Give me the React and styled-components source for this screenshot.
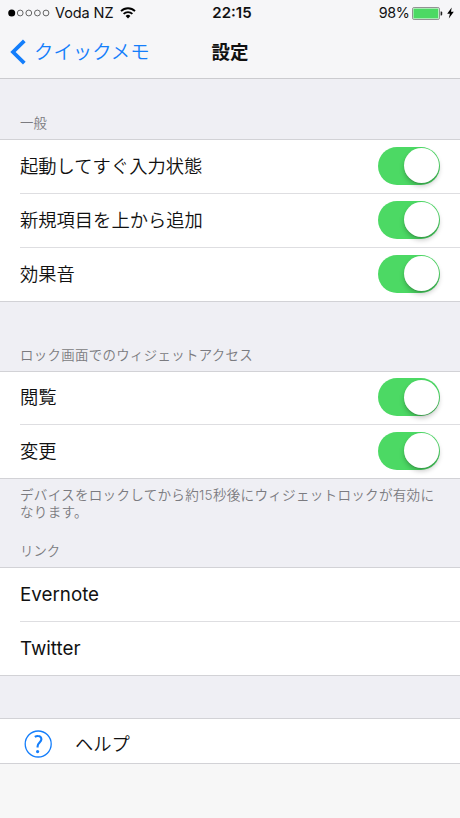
import React from "react";
import styled, { createGlobalStyle } from "styled-components";

const GlobalStyle = createGlobalStyle`
  *, *::before, *::after { box-sizing: border-box; }
  body {
    margin: 0;
    background: #efeff4;
    color: #111;
    font-family: Inter, "Noto Sans CJK JP", sans-serif;
  }
`;

const Screen = styled.main`
  display: flex;
  flex-direction: column;
  width: 460px;
  height: 818px;
  overflow: hidden;
  background: #efeff4;
`;

const Header = styled.header`
  flex: none;
  height: 79px;
  background: #f6f6f8;
  border-bottom: 1px solid #cbcbcf;
`;

const StatusBar = styled.div`
  display: grid;
  grid-template-columns: 1fr auto 1fr;
  align-items: center;
  height: 26px;
  padding: 0 6px 0 8px;
  font-size: 14.5px;
  line-height: 26px;
`;

const Carrier = styled.div`
  display: flex;
  align-items: center;
  white-space: nowrap;
`;

const CarrierName = styled.span`
  margin: 0 7px 0 5px;
  letter-spacing: -0.1px;
`;

const Clock = styled.time`
  padding-left: 2px;
  font-weight: 600;
  font-size: 15px;
`;

const Power = styled.div`
  display: flex;
  align-items: center;
  justify-content: flex-end;
  gap: 4px;
`;

const Percent = styled.span`
  margin-right: -1.5px;
  font-size: 14.3px;
  letter-spacing: -0.35px;
`;

const NavBar = styled.nav`
  display: grid;
  grid-template-columns: 1fr auto 1fr;
  align-items: center;
  height: 52px;
  padding: 0 10px;
`;

const BackButton = styled.button`
  display: flex;
  align-items: center;
  gap: 8px;
  padding: 0;
  border: 0;
  background: none;
  color: #147efb;
  font: inherit;
  font-size: 19.4px;
  font-weight: 350;
  line-height: 30px;
`;

const Title = styled.h1`
  margin: 0;
  font-size: 18.5px;
  line-height: 30px;
  font-weight: 700;
`;

const SectionLabel = styled.h2`
  display: flex;
  align-items: flex-end;
  flex: none;
  height: ${(p) => p.$height}px;
  margin: 0;
  padding: 0 20px 6px;
  color: #7b7b80;
  font-size: 13.4px;
  line-height: 20px;
  font-weight: 350;
  letter-spacing: ${(p) => p.$tracking || 0}px;
`;

const Group = styled.section`
  flex: none;
  background: #fff;
  border-top: 1px solid #d2d2d6;
  border-bottom: 1px solid #d2d2d6;
`;

const Row = styled.div`
  display: flex;
  align-items: center;
  justify-content: space-between;
  height: ${(p) => p.$height || 54}px;
  margin-left: 20px;
  padding: 0 20px 2px 0;
  border-bottom: 1px solid #dedee1;

  &:last-child {
    height: 53px;
    border-bottom: 0;
  }
`;

const LinkRow = styled(Row)`
  padding-bottom: 0;
`;

const RowLabel = styled.span`
  font-size: 18.3px;
  font-weight: 350;
  line-height: 28px;
`;

const LinkLabel = styled.span`
  font-size: 18.8px;
  line-height: 28px;
`;

const Toggle = styled.button`
  display: flex;
  justify-content: flex-end;
  width: 62.5px;
  height: 38px;
  padding: 1.5px;
  border: 0;
  border-radius: 19px;
  background: #4cd964;
`;

const Knob = styled.span`
  width: 35px;
  height: 35px;
  border-radius: 50%;
  background: #fff;
  box-shadow: 0 3px 5px rgba(0, 0, 0, 0.22), 0 1px 1px rgba(0, 0, 0, 0.12);
`;

const Footnote = styled.p`
  flex: none;
  height: 58px;
  margin: 0;
  padding: 8px 20px 0;
  color: #7b7b80;
  font-size: 13.6px;
  font-weight: 350;
  letter-spacing: 0.24px;
  line-height: 17px;
  white-space: nowrap;
`;

const Spacer = styled.div`
  flex: none;
  height: 42px;
`;

const HelpRow = styled.div`
  display: flex;
  align-items: center;
  gap: 23px;
  height: 44px;
  padding: 6px 24px 0;
`;

const Toolbar = styled.footer`
  flex: 1;
  background: #f7f7f7;
`;

function SignalDots() {
  return (
    <svg width="42" height="10" viewBox="0 0 42 10">
      <circle cx="3.7" cy="5" r="3.5" fill="#000" />
      {[12.2, 20.8, 29.4, 38].map((x) => (
        <circle key={x} cx={x} cy="5" r="2.9" fill="none" stroke="#555" strokeWidth="0.9" />
      ))}
    </svg>
  );
}

function Wifi() {
  return (
    <svg width="16" height="12" viewBox="0 0 16 12" fill="none" stroke="#000" strokeWidth="1.8">
      <path d="M1 4.1a10 10 0 0 1 14 0" />
      <path d="M3.6 6.9a6.3 6.3 0 0 1 8.8 0" />
      <path d="M5.6 9a3.5 3.5 0 0 1 4.8 0L8 11.5z" fill="#000" stroke="none" />
    </svg>
  );
}

function Battery() {
  return (
    <svg width="31" height="13" viewBox="0 0 31 13">
      <rect x="0.5" y="0.5" width="27" height="12" rx="1.6" fill="#fff" stroke="#777" strokeWidth="0.8" />
      <rect x="1.4" y="1.5" width="25" height="10" rx="0.6" fill="#4cd964" />
      <path d="M28.6 4.5h.6q1 0 1 1v2q0 1-1 1h-.6z" fill="#222" />
    </svg>
  );
}

function Bolt() {
  return (
    <svg width="7" height="12" viewBox="0 0 7 12">
      <path d="M4.7 0.4L0.2 6.7h2.7L1.8 11.6L6.8 4.8H4z" fill="#000" />
    </svg>
  );
}

function BackChevron() {
  return (
    <svg width="16" height="26" viewBox="0 0 16 26">
      <path d="M14.3 1.8L3 13l11.3 11.2" fill="none" stroke="#147efb" strokeWidth="3.8" />
    </svg>
  );
}

function HelpIcon() {
  return (
    <svg width="28" height="28" viewBox="0 0 28 28" fill="none" stroke="#147efb">
      <circle cx="14.2" cy="14" r="13" strokeWidth="1.3" />
      <path d="M10.8 6.9c1.1-.7 2.2-1 3.3-.9 2.1.1 3.4 1.4 3.3 3.4-.1 2.9-3.8 3.6-3.8 6.9v1.3" strokeWidth="2.1" />
      <circle cx="13.6" cy="21.6" r="1.6" fill="#147efb" stroke="none" />
    </svg>
  );
}

function SwitchRow({ label, height }) {
  return (
    <Row $height={height}>
      <RowLabel>{label}</RowLabel>
      <Toggle type="button" role="switch" aria-checked="true" aria-label={label}>
        <Knob />
      </Toggle>
    </Row>
  );
}

export default function App() {
  return (
    <Screen lang="ja">
      <GlobalStyle />
      <Header>
        <StatusBar>
          <Carrier>
            <SignalDots />
            <CarrierName>Voda NZ</CarrierName>
            <Wifi />
          </Carrier>
          <Clock>22:15</Clock>
          <Power>
            <Percent>98%</Percent>
            <Battery />
            <Bolt />
          </Power>
        </StatusBar>
        <NavBar>
          <BackButton type="button">
            <BackChevron />
            クイックメモ
          </BackButton>
          <Title>設定</Title>
        </NavBar>
      </Header>

      <SectionLabel $height={60}>一般</SectionLabel>
      <Group>
        <SwitchRow label="起動してすぐ入力状態" />
        <SwitchRow label="新規項目を上から追加" />
        <SwitchRow label="効果音" />
      </Group>

      <SectionLabel $height={69} $tracking={0.35}>ロック画面でのウィジェットアクセス</SectionLabel>
      <Group>
        <SwitchRow label="閲覧" height={53} />
        <SwitchRow label="変更" />
      </Group>
      <Footnote>
        デバイスをロックしてから約15秒後にウィジェットロックが有効に
        <br />
        なります。
      </Footnote>

      <SectionLabel $height={30}>リンク</SectionLabel>
      <Group>
        <LinkRow>
          <LinkLabel>Evernote</LinkLabel>
        </LinkRow>
        <LinkRow>
          <LinkLabel>Twitter</LinkLabel>
        </LinkRow>
      </Group>
      <Spacer />
      <Group>
        <HelpRow>
          <HelpIcon />
          <RowLabel>ヘルプ</RowLabel>
        </HelpRow>
      </Group>
      <Toolbar />
    </Screen>
  );
}
